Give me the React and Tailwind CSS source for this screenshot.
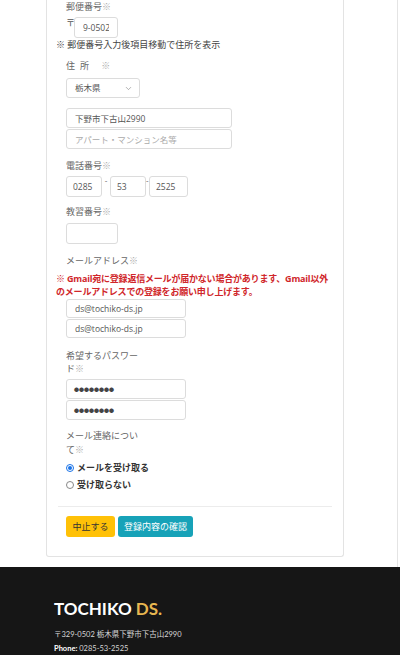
import { ChevronDown } from 'lucide-react';

const jp = { fontFamily: '"Open Sans", "Noto Sans CJK JP", sans-serif' };

const Label = ({ children, className = '' }) => (
    <div className={`text-[9px] leading-[14px] text-[#666] ${className}`}>
        {children}
        <span className="text-[#aaa]">※</span>
    </div>
);

const Field = ({ value, placeholder, className = '' }) => (
    <input
        type="text"
        readOnly
        defaultValue={value}
        placeholder={placeholder}
        className={`block border border-[#dcdcdc] rounded-[3px] bg-white text-[8.5px] text-[#555] placeholder:text-[#aaa] outline-none ${className}`}
        style={jp}
    />
);

const Dots = ({ className = '' }) => (
    <div
        className={`w-[120px] h-[20px] border border-[#dcdcdc] rounded-[3px] flex items-center px-[7px] text-[5px] text-[#444] ${className}`}
        style={{ fontFamily: '"Noto Sans CJK JP", sans-serif' }}
    >
        ●●●●●●●●
    </div>
);

export default function App() {
    return (
        <div className="w-[400px] bg-white" style={jp}>
            <div className="w-[398px] border-r border-[#e4e4e4] pb-[10px]">
                <div className="ml-[46px] w-[298px] border border-t-0 border-[#e3e3e3] rounded-b-[3px] px-[9px] pb-[19px]">
                    {/* 郵便番号 */}
                    <div className="pl-[10px]">
                        <Label>郵便番号</Label>
                        <div className="mt-[3px] flex items-start">
                            <span className="text-[9px] leading-[12px] text-[#555] w-[8px]">〒</span>
                            <Field value="9-0502" className="w-[44px] h-[21px] px-[8px]" />
                        </div>
                    </div>
                    <div className="text-[9px] leading-[14px] text-[#444]">※ 郵便番号入力後項目移動で住所を表示</div>

                    {/* 住所 */}
                    <div className="pl-[10px] mt-[7px]">
                        <div className="text-[9px] leading-[14px] text-[#666] tracking-[5px]">
                            住所 <span className="text-[#aaa]">※</span>
                        </div>
                        <div className="mt-[5px] w-[74px] h-[20px] border border-[#dcdcdc] rounded-[3px] flex items-center justify-between pl-[8px] pr-[6px]">
                            <span className="text-[8.5px] text-[#555]">栃木県</span>
                            <ChevronDown size={9} className="text-[#777]" strokeWidth={1.5} />
                        </div>
                        <Field value="下野市下古山2990" className="mt-[10px] w-[166px] h-[20px] px-[8px]" />
                        <Field placeholder="アパート・マンション名等" className="mt-[1px] w-[166px] h-[20px] px-[8px]" />
                    </div>

                    {/* 電話番号 */}
                    <div className="pl-[10px] mt-[10px]">
                        <Label>電話番号</Label>
                        <div className="mt-[3px] flex items-start">
                            <Field value="0285" className="w-[36px] h-[21px] px-[6px]" />
                            <span className="w-[8px] text-center text-[8px] leading-[8px] text-[#555]">-</span>
                            <Field value="53" className="w-[36px] h-[21px] px-[6px]" />
                            <span className="w-[3px] text-[8px] leading-[8px] text-[#555]">-</span>
                            <Field value="2525" className="w-[39px] h-[21px] px-[6px]" />
                        </div>
                    </div>

                    {/* 教習番号 */}
                    <div className="pl-[10px] mt-[8px]">
                        <Label>教習番号</Label>
                        <Field className="mt-[4px] w-[52px] h-[21px] px-[6px]" />
                    </div>

                    {/* メールアドレス */}
                    <div className="pl-[10px] mt-[10px]">
                        <Label>メールアドレス</Label>
                    </div>
                    <div className="mt-[4px] text-[9px] leading-[13px] font-bold text-[#d0262a] whitespace-nowrap tracking-[-0.2px]">
                        ※ Gmail宛に登録返信メールが届かない場合があります、Gmail以外<br />
                        のメールアドレスでの登録をお願い申し上げます。
                    </div>
                    <div className="pl-[10px]">
                        <Field value="ds@tochiko-ds.jp" className="mt-[1px] w-[120px] h-[19px] px-[8px]" />
                        <Field value="ds@tochiko-ds.jp" className="mt-[1px] w-[120px] h-[19px] px-[8px]" />
                    </div>

                    {/* パスワード */}
                    <div className="pl-[10px] mt-[11px]">
                        <div className="w-[73px] text-[9px] leading-[13px] text-[#666]">
                            希望するパスワード<span className="text-[#aaa]">※</span>
                        </div>
                        <Dots className="mt-[4px]" />
                        <Dots className="mt-[1px]" />
                    </div>

                    {/* メール連絡 */}
                    <div className="pl-[10px] mt-[9px]">
                        <div className="w-[73px] text-[9px] leading-[14px] text-[#666]">
                            メール連絡について<span className="text-[#aaa]">※</span>
                        </div>
                        <div className="mt-[2px] flex flex-col">
                            <div className="flex items-center h-[17px] gap-[3px]">
                                <span className="w-[8px] h-[8px] rounded-full border border-[#1a73e8] flex items-center justify-center">
                                    <span className="w-[4px] h-[4px] rounded-full bg-[#1a73e8]" />
                                </span>
                                <span className="text-[9px] font-bold text-[#333]">メールを受け取る</span>
                            </div>
                            <div className="flex items-center h-[17px] gap-[3px]">
                                <span className="w-[8px] h-[8px] rounded-full border border-[#888]" />
                                <span className="text-[9px] font-bold text-[#333]">受け取らない</span>
                            </div>
                        </div>
                    </div>

                    <div className="mt-[13px] mx-[2px] border-t border-[#ececec]" />

                    <div className="pl-[10px] mt-[9px] flex gap-[3px]">
                        <button className="w-[49px] h-[21px] rounded-[3px] bg-[#ffc107] text-[9px] text-[#333]">中止する</button>
                        <button className="w-[75px] h-[21px] rounded-[3px] bg-[#17a2b8] text-[9px] text-white">登録内容の確認</button>
                    </div>
                </div>
            </div>

            <footer className="h-[89px] bg-[#161616] pl-[54px] pt-[32px]" style={{ fontFamily: 'Lato, "Noto Sans CJK JP", sans-serif' }}>
                <div className="text-[17px] leading-[20px] font-bold text-white">
                    TOCHIKO <span className="text-[#e7b650]">DS.</span>
                </div>
                <div className="mt-[9px] text-[7.5px] leading-[14px] text-[#d6d6d6]">
                    〒329-0502 栃木県下野市下古山2990
                </div>
                <div className="text-[7.5px] leading-[14px] text-[#d6d6d6]">
                    <span className="font-bold text-white">Phone:</span> 0285-53-2525
                </div>
            </footer>
        </div>
    );
}
